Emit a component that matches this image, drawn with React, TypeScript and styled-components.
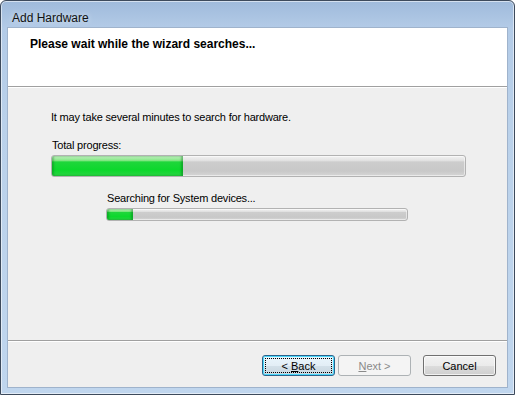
import styled, { createGlobalStyle } from 'styled-components'

const steps = [
	{ label: 'Total progress:', percent: 31.6, indent: 0, width: 415, height: 22 },
	{ label: 'Searching for System devices...', percent: 8.8, indent: 55, width: 302, height: 13 },
]

export default function App() {
	return (
		<>
			<GlobalStyle />
			<WindowFrame>
				{/* Title bar */}
				<TitleBar>Add Hardware</TitleBar>

				<ClientArea>
					{/* Wizard header */}
					<WizardHeader>Please wait while the wizard searches...</WizardHeader>

					{/* Body */}
					<WizardBody>
						<Intro>It may take several minutes to search for hardware.</Intro>
						{steps.map((step) => (
							<ProgressGroup key={step.label} $indent={step.indent}>
								<ProgressLabel>{step.label}</ProgressLabel>
								<ProgressTrack $width={step.width} $height={step.height}>
									<ProgressFill style={{ width: `${step.percent}%` }} />
								</ProgressTrack>
							</ProgressGroup>
						))}
					</WizardBody>

					{/* Buttons */}
					<WizardFooter>
						<PushButton $variant="default">
							<FocusRing>
								<span>
									&lt; <u>B</u>ack
								</span>
							</FocusRing>
						</PushButton>
						<PushButton $variant="disabled" disabled $gapAfter={9}>
							<span>
								<u>N</u>ext &gt;
							</span>
						</PushButton>
						<PushButton>Cancel</PushButton>
					</WizardFooter>
				</ClientArea>
			</WindowFrame>
		</>
	)
}

const GlobalStyle = createGlobalStyle`
	html, body {
		margin: 0;
		padding: 0;
		background: #ffffff;
	}

	body {
		font-family: "Liberation Sans", Arial, sans-serif;
		color: #000;
	}
`

const WindowFrame = styled.div`
	width: 515px;
	height: 395px;
	box-sizing: border-box;
	display: flex;
	flex-direction: column;
	padding: 0 7px 7px 7px;
	border: 1px solid #3d4a5c;
	border-radius: 6px 6px 0 0;
	background: linear-gradient(to bottom, #9fbadb 0px, #b3cbe7 27px, #bad1ea 120px, #c0d6ee 100%);
	box-shadow: inset 0 0 0 1px rgba(255, 255, 255, 0.55);
`

const TitleBar = styled.div`
	height: 27px;
	box-sizing: border-box;
	padding: 10px 0 0 4px;
	font-size: 12px;
	line-height: 14px;
	color: #111;
	text-shadow: 0 0 6px rgba(255, 255, 255, 0.7);
`

const ClientArea = styled.div`
	flex: 1;
	display: flex;
	flex-direction: column;
	background: #efefef;
	box-shadow: 0 0 0 1px #9fb3cc;
`

const WizardHeader = styled.div`
	height: 59px;
	box-sizing: border-box;
	padding: 9px 0 0 22px;
	background: #ffffff;
	border-bottom: 1px solid #a0a0a0;
	font-size: 12px;
	line-height: 14px;
	font-weight: bold;
`

const WizardBody = styled.div`
	flex: 1;
	display: flex;
	flex-direction: column;
	padding: 23px 0 0 43px;
	border-top: 1px solid #ffffff;
`

const Intro = styled.div`
	font-size: 11px;
	line-height: 13px;
	letter-spacing: -0.2px;
	margin-bottom: 15px;
`

const ProgressGroup = styled.div<{ $indent: number }>`
	display: flex;
	flex-direction: column;
	gap: 3px;
	margin: 0 0 15px ${(p) => p.$indent}px;
`

const ProgressLabel = styled.div`
	font-size: 11px;
	line-height: 13px;
	letter-spacing: -0.2px;
	padding-left: 1px;
`

const ProgressTrack = styled.div<{ $width: number; $height: number }>`
	width: ${(p) => p.$width}px;
	height: ${(p) => p.$height}px;
	box-sizing: border-box;
	display: flex;
	border: 1px solid #b2b2b2;
	border-radius: 3px;
	overflow: hidden;
	background: linear-gradient(
		to bottom,
		#f2f2f2 0%,
		#e3e3e3 22%,
		#cdcdcd 30%,
		#c8c8c8 75%,
		#d6d6d6 100%
	);
	box-shadow: inset 0 0 0 1px rgba(255, 255, 255, 0.5);
`

const ProgressFill = styled.div`
	height: 100%;
	background: linear-gradient(
		to bottom,
		#c4f3c4 0%,
		#86e886 22%,
		#1fd63b 30%,
		#0cd82c 70%,
		#2ad443 100%
	);
	box-shadow: inset -2px 0 2px rgba(0, 90, 20, 0.35), inset 2px 0 2px rgba(0, 90, 20, 0.3);
`

const PushButton = styled.button<{ $variant?: 'default' | 'disabled'; $gapAfter?: number }>`
	width: 73px;
	height: 21px;
	box-sizing: border-box;
	margin: 0 ${(p) => p.$gapAfter ?? 0}px 0 0;
	padding: 0;
	display: flex;
	align-items: center;
	justify-content: center;
	font-family: "Liberation Sans", Arial, sans-serif;
	font-size: 11px;
	color: #000;
	border: 1px solid #707070;
	border-radius: 3px;
	background: linear-gradient(to bottom, #f2f2f2 0%, #ebebeb 50%, #dddddd 51%, #cfcfcf 100%);
	box-shadow: inset 0 0 0 1px rgba(255, 255, 255, 0.7);

	${(p) =>
		p.$variant === 'default' &&
		`
		border-color: #2c628b;
		box-shadow: inset 0 0 0 1px #48d8fb;
		background: linear-gradient(to bottom, #eaf6fd 0%, #e3eef6 50%, #d4e1ea 51%, #c8d6df 100%);
	`}

	${(p) =>
		p.$variant === 'disabled' &&
		`
		color: #8a8a8a;
		border-color: #adb2b5;
		background: #f4f4f4;
		box-shadow: none;
	`}

	u {
		text-underline-offset: 1px;
	}
`

const FocusRing = styled.span`
	display: flex;
	align-items: center;
	justify-content: center;
	box-sizing: border-box;
	width: 67px;
	height: 15px;
	outline: 1px dotted #000;
	outline-offset: -1px;
`

const WizardFooter = styled.div`
	height: 47px;
	box-sizing: border-box;
	display: flex;
	justify-content: flex-end;
	align-items: flex-start;
	gap: 3px;
	padding: 14px 11px 0 0;
	border-top: 1px solid #a0a0a0;
	box-shadow: inset 0 1px 0 #ffffff;
`
